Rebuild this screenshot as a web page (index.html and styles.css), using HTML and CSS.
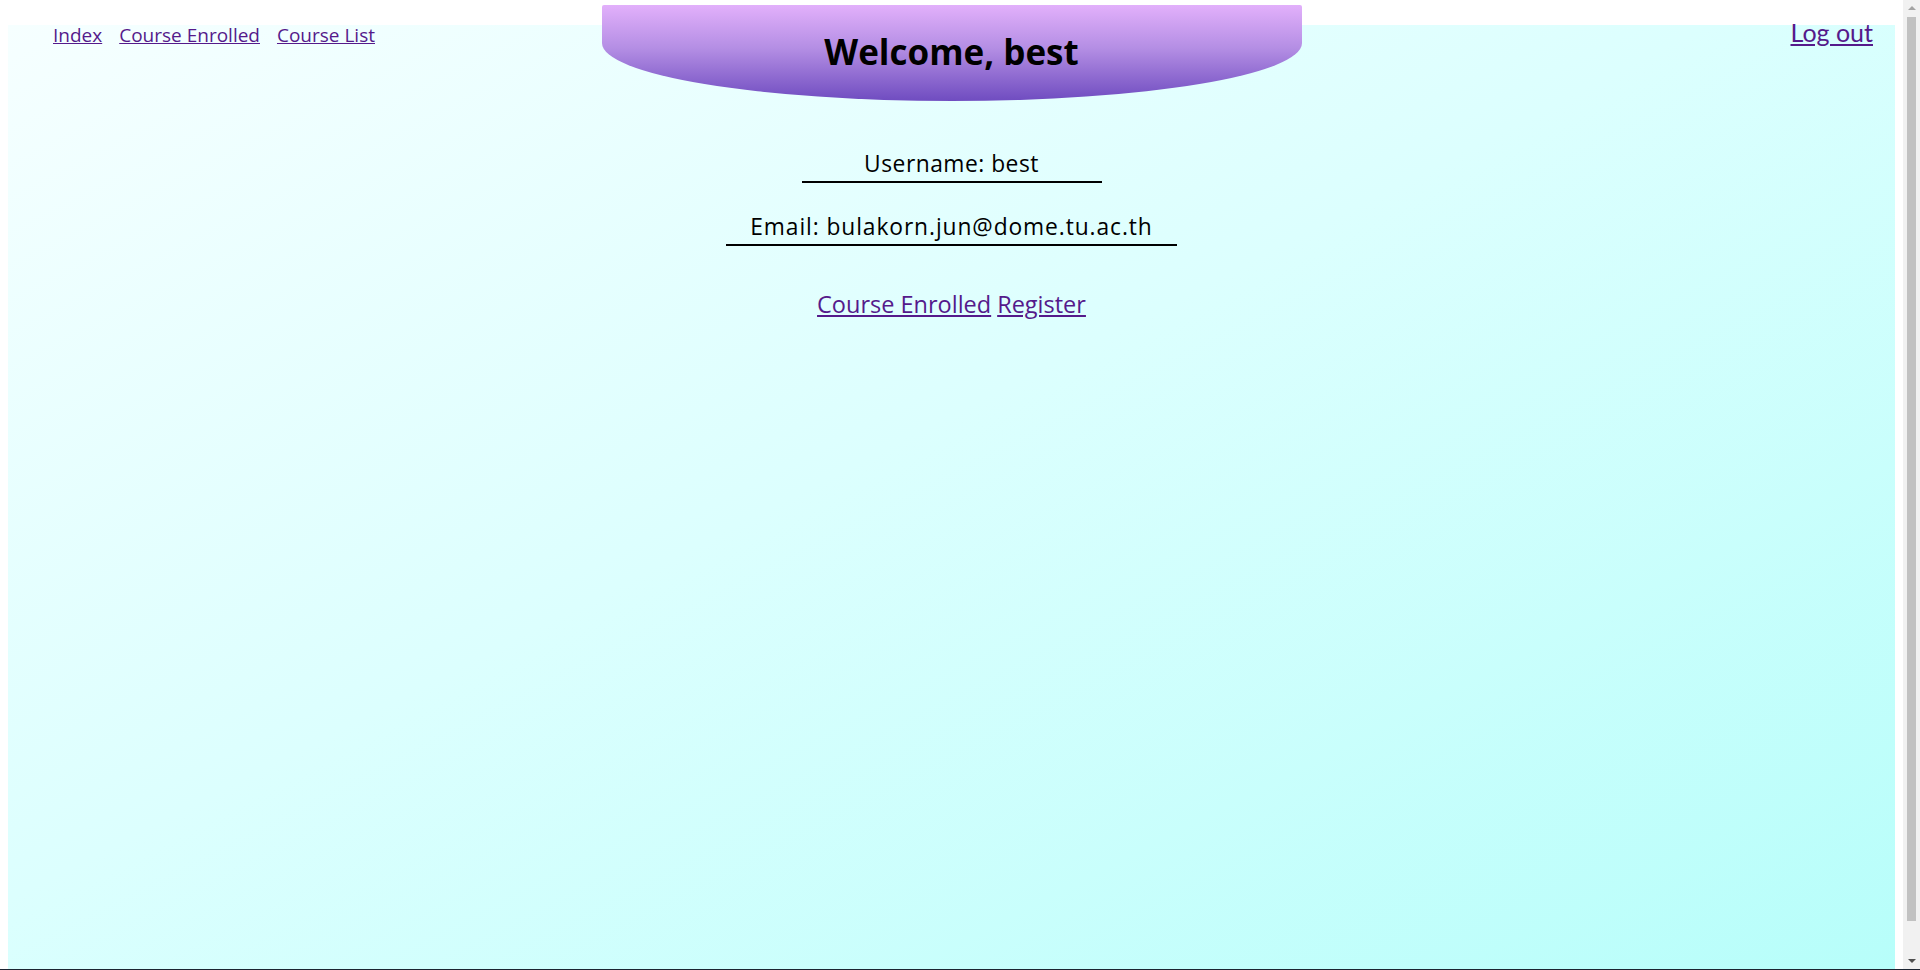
FILE: index.html
```html
<!DOCTYPE html>
<html lang="en">
<head>
<meta charset="utf-8">
<title>Welcome</title>
<link rel="stylesheet" href="styles.css">
</head>
<body>
<div class="viewport">
  <header class="banner">
    <h1 class="banner-title">Welcome, best</h1>
  </header>
  <div class="page">
    <nav class="topnav">
      <div class="topnav-links">
        <a href="#" class="nav-link">Index</a>
        <a href="#" class="nav-link">Course Enrolled</a>
        <a href="#" class="nav-link">Course List</a>
      </div>
      <a href="#" class="logout">Log out</a>
    </nav>
    <main class="profile">
      <div class="field field-user">Username: best</div>
      <div class="field field-email">Email: bulakorn.jun@dome.tu.ac.th</div>
      <div class="actions">
        <a href="#" class="action-link">Course Enrolled</a>
        <a href="#" class="action-link">Register</a>
      </div>
    </main>
  </div>
</div>
<div class="scrollbar" aria-hidden="true">
  <span class="scroll-arrow scroll-up"></span>
  <span class="scroll-thumb"></span>
  <span class="scroll-arrow scroll-down"></span>
</div>
<div class="window-edge" aria-hidden="true"></div>
</body>
</html>
```
FILE: styles.css
```css
html, body {
  margin: 0;
  height: 970px;
  overflow: hidden;
}
body {
  background: #ffffff;
  font-family: "Open Sans", "Liberation Sans", sans-serif;
  color: #000;
}
a {
  color: #551a8b;
  text-decoration: underline;
}
.viewport {
  position: relative;
  width: 1903px;
  padding: 8px;
  box-sizing: border-box;
}
.banner {
  position: absolute;
  top: 5px;
  left: 50%;
  transform: translateX(-50%);
  width: 700px;
  height: 96px;
  background: linear-gradient(to bottom, #e2b0fb 0%, #b48ee4 45%, #6f4cc0 100%);
  border-radius: 2px 2px 50% 50% / 2px 2px 58px 58px;
  display: flex;
  justify-content: center;
  z-index: 2;
}
.banner-title {
  margin: 0;
  padding-top: 23px;
  font-size: 35px;
  line-height: 48px;
  font-weight: 700;
  height: 48px;
}
.page {
  margin-top: 17px;
  height: 970px;
  background: linear-gradient(to bottom right, #f6ffff 0%, #dcfffe 45%, #b6fefa 100%);
  display: flex;
  flex-direction: column;
}
.topnav {
  display: flex;
  justify-content: space-between;
  align-items: baseline;
  padding: 0 22px 0 45px;
  line-height: 14px;
}
.topnav-links {
  display: flex;
  gap: 17px;
  align-items: baseline;
}
.nav-link {
  font-size: 19px;
}
.logout {
  font-family: Lato, "Open Sans", sans-serif;
  font-size: 25px;
}
.profile {
  margin-top: 106px;
  display: flex;
  flex-direction: column;
  align-items: center;
  font-size: 22.8px;
  line-height: 28px;
}
.field {
  text-align: center;
  padding-top: 2px;
  padding-bottom: 3px;
  border-bottom: 2px solid #000;
  box-sizing: border-box;
}
.field-user {
  width: 300px;
  letter-spacing: 0.5px;
}
.field-email {
  margin-top: 28px;
  padding-left: 24px;
  padding-right: 24px;
  letter-spacing: 0.9px;
}
.actions {
  margin-top: 44px;
  display: flex;
  gap: 6px;
}
.action-link {
  font-size: 23.5px;
}
.scrollbar {
  position: fixed;
  top: 0;
  right: 0;
  width: 17px;
  height: 970px;
  background: #f1f1f1;
  display: flex;
  flex-direction: column;
  align-items: center;
}
.scroll-arrow {
  width: 0;
  height: 0;
  border-left: 4px solid transparent;
  border-right: 4px solid transparent;
}
.scroll-up {
  margin-top: 6px;
  border-bottom: 4px solid #a3a3a3;
}
.scroll-thumb {
  margin-top: 7px;
  width: 9px;
  height: 904px;
  background: #c1c1c1;
}
.scroll-down {
  margin-top: auto;
  margin-bottom: 7px;
  border-top: 4px solid #505050;
}
.window-edge {
  position: fixed;
  left: 0;
  right: 0;
  bottom: 0;
  height: 1px;
  background: #1c2431;
}
```
